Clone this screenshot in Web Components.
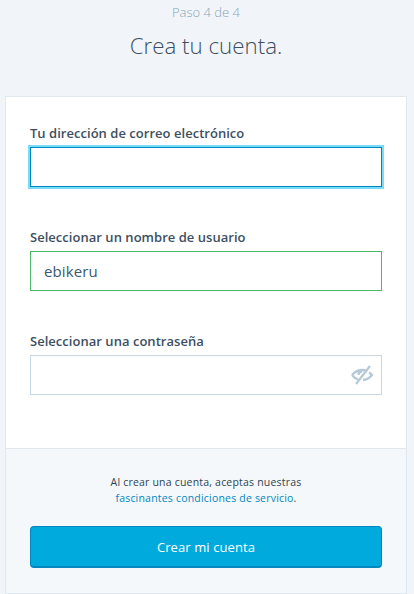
<!DOCTYPE html>
<html lang="es"><head><meta charset="utf-8"><title>Crea tu cuenta</title>
<style>
html,body{margin:0;padding:0;height:594px;overflow:hidden;background:#f1f5f9}
body{font-family:"Open Sans","Noto Sans",sans-serif}
</style></head><body>
<signup-page>
<step-header step="Paso 4 de 4" title="Crea tu cuenta."></step-header>
<signup-card>
  <form-field label="Tu dirección de correo electrónico" state="focus"></form-field>
  <form-field label="Seleccionar un nombre de usuario" state="valid" value="ebikeru"></form-field>
  <form-field label="Seleccionar una contraseña" icon="eye"></form-field>
  <terms-note slot="footer"><span>Al crear una cuenta, aceptas nuestras</span><br><a>fascinantes condiciones de servicio</a>.</terms-note>
  <primary-button slot="footer">Crear mi cuenta</primary-button>
</signup-card>
</signup-page>
<script>
function def(name,html){
  customElements.define(name,class extends HTMLElement{
    connectedCallback(){
      if(this.shadowRoot)return;
      const r=this.attachShadow({mode:'open'});
      r.innerHTML=typeof html==='function'?html(this):html;
    }
  });
}
def('signup-page',`<style>:host{display:block;height:594px;box-sizing:border-box;padding:0 7px 0 5px}</style><slot></slot>`);
def('step-header',h=>`<style>
:host{display:block;text-align:center;height:96px;box-sizing:border-box;padding-top:3px}
.s{font-size:13px;line-height:18px;font-weight:300;color:#87a6bc}
h1{margin:8px 0 0;font-size:22.300px;line-height:34px;font-weight:300;color:#3d4f5f}
</style><div class="s">${h.getAttribute('step')}</div><h1>${h.getAttribute('title')}</h1>`);
def('signup-card',`<style>
:host{display:block;background:#fff;border:1px solid #e0e8f0;height:498px;box-sizing:border-box}
.main{padding:23px 24px 0;height:351px;box-sizing:border-box;display:flex;flex-direction:column;gap:24px}
footer{background:#f5f8fa;border-top:1px solid #e0e8f0;padding:25px 24px 0;height:145px;box-sizing:border-box}
</style><div class="main"><slot></slot></div><footer><slot name="footer"></slot></footer>`);
def('form-field',h=>{
const st=h.getAttribute('state')||'';const v=h.getAttribute('value')||'';const ic=h.getAttribute('icon');
return `<style>
:host{display:block;height:80px}
label{display:block;height:27px;font-size:13px;line-height:26px;font-weight:600;letter-spacing:.03px;color:#3d4f5f}
.box{height:40px;box-sizing:border-box;border:1px solid #c8d7e1;display:flex;align-items:center;justify-content:space-between;padding:0 8px 0 13px;font-size:15px;letter-spacing:.1px;color:#3d596d;background:#fff}
.focus{border-color:#0087be;box-shadow:0 0 0 2px #78dcfa}
.valid{border-color:#4ab866}
svg{display:block}
</style><label>${h.getAttribute('label')}</label><div class="box ${st}"><span>${v}</span>${ic?`<svg width="22" height="20" viewBox="0 0 22 20" fill="none" stroke="#b5c9d8" stroke-width="2.300"><path d="M1 10C4 6.800 7.500 5 11 5c1.500 0 3 .300 4 .800"/><path d="M7 14.500C4.800 13.800 2.800 12.200 1 10"/><path d="M18 7.500c1 .700 2 1.500 3 2.500-2.500 3-5.500 4.800-9 5"/><path d="M7.500 10c0-2 1.500-3.500 3.500-3.500" stroke-width="2.400"/><path d="M19 1 5 19" stroke-width="2.200"/></svg>`:''}</div>`});
def('terms-note',`<style>
:host{display:block;text-align:center;font-size:10.500px;line-height:16px;color:#2e4453;height:52px;letter-spacing:.2px}
::slotted(a){color:#0087be}
</style><slot></slot>`);
def('primary-button',`<style>
:host{display:flex;align-items:center;justify-content:center;height:42px;box-sizing:border-box;background:#00aadc;border:1px solid #0087be;border-bottom-width:2px;border-radius:4px;color:#fff;font-size:13px;font-weight:400;letter-spacing:.1px}
</style><slot></slot>`);
</script>
</body></html>
